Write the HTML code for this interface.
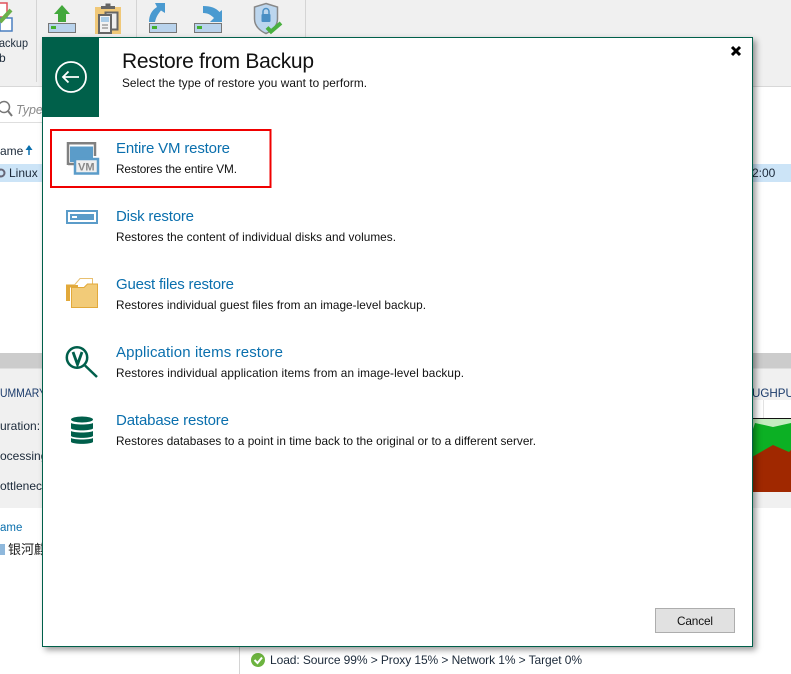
<!DOCTYPE html>
<html><head><meta charset="utf-8"><style>
html,body{margin:0;padding:0;background:#fff;width:791px;height:674px;overflow:hidden}
#dlg{position:absolute;left:42px;top:37px;width:709px;height:608px;background:#fff;border:1px solid #00604a;box-shadow:3px 3px 6px rgba(0,0,0,.4)}
svg{position:absolute;left:0;top:0}
text{font-family:"Liberation Sans","Noto Sans CJK SC",sans-serif}
.t{font-size:15px;fill:#0a6fad}
.d{font-size:11.8px;fill:#111}
.b{font-size:12px;fill:#1c2a3a}
</style></head><body>
<svg width="791" height="674" viewBox="0 0 791 674">
<rect x="0" y="0" width="791" height="86" fill="#f0f0f0"/>
<rect x="0" y="86" width="791" height="1" fill="#d8d8d8"/>
<rect x="36" y="0" width="1" height="82" fill="#d4d4d4"/>
<rect x="136" y="0" width="1" height="82" fill="#d4d4d4"/>
<rect x="305" y="0" width="1" height="82" fill="#d4d4d4"/>
<!-- backup icon -->
<rect x="-6" y="3" width="13" height="14" fill="#fff" stroke="#e0505a" stroke-width="1.5"/>
<rect x="0" y="18" width="12" height="13" fill="#fff" stroke="#4a7fc0" stroke-width="1.5"/>
<path d="M0 22L11 10" stroke="#6bb04a" stroke-width="4" fill="none"/>
<text x="-1" y="47" class="b" textLength="29" lengthAdjust="spacingAndGlyphs">ackup</text>
<text x="-1" y="62" class="b">b</text>
<!-- toolbar icons -->
<path d="M62 5L70 14H66V22H58V14H54Z" fill="#43a83c"/>
<rect x="48.500" y="23.500" width="27" height="9" fill="#b9d3ec" stroke="#777" stroke-width="1"/>
<rect x="51" y="26" width="5" height="3" fill="#43b030"/>
<rect x="95" y="7" width="26" height="27" fill="#f0c878"/>
<path d="M101 9V6H105.500V3.500H110.500V6H115V9Z" fill="#666"/>
<rect x="105.500" y="12.500" width="12" height="17" fill="#eee" stroke="#666" stroke-width="2"/>
<rect x="99" y="15" width="12" height="18" fill="#f2f2f2" stroke="#666" stroke-width="2"/>
<rect x="101" y="17" width="8" height="5" fill="#a9cce8"/>
<path d="M102 25H108M102 28H108" stroke="#777"/>
<path d="M149 22C149 15 152 10 157 7L155 3H165V13L161 10.500C158 14 156 17 155 22Z" fill="#4a9ad0"/>
<rect x="149.500" y="23.500" width="27" height="9" fill="#b9d3ec" stroke="#777"/>
<rect x="152" y="26" width="5" height="3" fill="#43b030"/>
<path d="M203 6C211 6 216 8 219.500 12L222 10V22H210L214 18C211 15 208 13 203 13Z" fill="#4a9ad0"/>
<rect x="194.500" y="23.500" width="27" height="9" fill="#b9d3ec" stroke="#777"/>
<rect x="197" y="26" width="5" height="3" fill="#43b030"/>
<path d="M266 3.500L277.500 7V19C277.500 26 272 31 266 33.500C260 31 254.500 26 254.500 19V7Z" fill="#bcd6ee" stroke="#888" stroke-width="1.500"/>
<rect x="261.500" y="14" width="9" height="8" rx="1" fill="#4a8fc4"/>
<path d="M263 14V11.500A3 3 0 0 1 269 11.500V14" stroke="#4a8fc4" stroke-width="1.500" fill="none"/>
<path d="M267 27.500L271 31.500L281 23" stroke="#4ab040" stroke-width="4" fill="none"/>
<!-- left list -->
<rect x="0" y="122" width="42" height="1" fill="#dedede"/>
<circle cx="4" cy="107" r="5.500" fill="none" stroke="#777" stroke-width="1.500"/>
<path d="M8 111L12 116" stroke="#777" stroke-width="2"/>
<text x="16" y="114" font-size="12.500" font-style="italic" fill="#8a8a8a">Type</text>
<text x="0" y="155" font-size="12" fill="#1c2a3a">ame</text>
<path d="M29 155V146" stroke="#0a6fad" stroke-width="1.500"/>
<path d="M25.500 150L29 145L32.500 150Z" fill="#0a6fad"/>
<rect x="0" y="164" width="791" height="18" fill="#cce4f7"/>
<circle cx="1" cy="173" r="3.500" fill="none" stroke="#667" stroke-width="2"/>
<text x="9" y="177" class="b">Linux</text>
<text x="752" y="177" class="b">2:00</text>
<!-- lower band -->
<rect x="0" y="353" width="791" height="15" fill="#cccccc"/>
<rect x="0" y="368" width="791" height="140" fill="#f0f0f0"/>
<rect x="0" y="368" width="791" height="1" fill="#dedede"/>
<text x="0" y="397" font-size="12" fill="#1a3a6a" textLength="46" lengthAdjust="spacingAndGlyphs">UMMARY</text>
<text x="0" y="430" class="b">uration:</text>
<text x="0" y="460" class="b">ocessing</text>
<text x="0" y="490" class="b" textLength="48" lengthAdjust="spacingAndGlyphs">ottleneck</text>
<text x="0" y="531" font-size="11.500" fill="#0a6fad">ame</text>
<rect x="0" y="544" width="5" height="11" fill="#8fb8dc"/>
<text x="8" y="554" font-size="13" fill="#222">银河麒</text>
<text x="743" y="397" font-size="12" fill="#1a3a6a" textLength="58" lengthAdjust="spacingAndGlyphs">OUGHPUT</text>
<rect x="752" y="400" width="39" height="18" fill="#fff"/>
<rect x="763" y="400" width="1" height="18" fill="#e2e2e2"/>
<rect x="752" y="418" width="39" height="74" fill="#c4ecc0"/>
<path d="M752 432L755 423L773 427L791 423V492H752Z" fill="#0cb024"/>
<path d="M752 457L773 445L789 452L791 450V492H752Z" fill="#a02800"/>
<rect x="752" y="418" width="39" height="1" fill="#111"/>
<!-- bottom status -->
<rect x="239" y="646" width="1" height="28" fill="#d4d4d4"/>
<circle cx="258" cy="660" r="7" fill="#6cb33f"/>
<path d="M254.500 660L257.500 663L262 657.500" stroke="#fff" stroke-width="2" fill="none"/>
<text x="270" y="664" class="b" textLength="312">Load: Source 99% &gt; Proxy 15% &gt; Network 1% &gt; Target 0%</text>
</svg>
<div id="dlg"></div>
<svg width="791" height="674" viewBox="0 0 791 674">
<rect x="43" y="38" width="56" height="79" fill="#00604a"/>
<circle cx="71" cy="77" r="15" fill="none" stroke="#fff" stroke-width="1.800"/>
<path d="M79 77H63M68.500 71.500L63 77L68.500 82.500" fill="none" stroke="#fff" stroke-width="1.800"/>
<path d="M732 47L740 55M740 47L732 55" stroke="#000" stroke-width="3"/>
<text x="122" y="68" font-size="21" fill="#111" textLength="192">Restore from Backup</text>
<text x="122" y="87" class="d" textLength="245">Select the type of restore you want to perform.</text>
<rect x="51" y="130" width="219.500" height="57" fill="none" stroke="#f00000" stroke-width="2"/>

<text x="116" y="153" class="t" textLength="114">Entire VM restore</text>
<text x="116" y="173" class="d" textLength="121">Restores the entire VM.</text>
<text x="116" y="221" class="t" textLength="78">Disk restore</text>
<text x="116" y="241" class="d" textLength="280">Restores the content of individual disks and volumes.</text>
<text x="116" y="289" class="t" textLength="118">Guest files restore</text>
<text x="116" y="309" class="d" textLength="310">Restores individual guest files from an image-level backup.</text>
<text x="116" y="357" class="t" textLength="167">Application items restore</text>
<text x="116" y="377" class="d" textLength="348">Restores individual application items from an image-level backup.</text>
<text x="116" y="425" class="t" textLength="113">Database restore</text>
<text x="116" y="445" class="d" textLength="420">Restores databases to a point in time back to the original or to a different server.</text>

<!-- VM icon -->
<path d="M68 165V143.300H95V156" fill="none" stroke="#808080" stroke-width="2.500"/>
<path d="M68 164H74" stroke="#808080" stroke-width="2.500"/>
<rect x="70" y="146.500" width="23" height="12" fill="#5b9cc9"/>
<rect x="70" y="158" width="4" height="4" fill="#5b9cc9"/>
<rect x="75" y="159" width="23" height="14.500" fill="#efefef" stroke="#5b9cc9" stroke-width="2.500"/>
<text x="78" y="170.500" font-size="11" font-weight="bold" fill="#888">VM</text>
<!-- Disk icon -->
<rect x="67" y="211" width="30" height="12" fill="#fff" stroke="#5b9cc9" stroke-width="2"/>
<rect x="70" y="214" width="24" height="6" fill="#5b9cc9"/>
<rect x="72" y="216" width="5" height="2" fill="#fff"/>
<!-- Folder icon -->
<rect x="66" y="285" width="4" height="16" fill="#e2a93a"/>
<rect x="66" y="284.500" width="12" height="3" fill="#e2a93a"/>
<path d="M74.500 285L80 278.500H92.500V285" fill="#fff" stroke="#e8c070"/>
<path d="M71.500 307.500V287.500H84L87.500 284H97.500V307.500Z" fill="#f2cb78" stroke="#e2a93a"/>
<!-- App icon -->
<circle cx="77" cy="357.500" r="10.200" fill="none" stroke="#005f4b" stroke-width="2.500"/>
<path d="M85 365.500L97 377" stroke="#005f4b" stroke-width="2.500"/>
<path d="M73 352L77.500 364.500L82 352" stroke="#005f4b" stroke-width="2.800" fill="none"/>
<!-- DB icon -->
<ellipse cx="82" cy="419.500" rx="11" ry="3" fill="#005f4b"/>
<path d="M71 423C74 425 90 425 93 423V428.500C90 431 74 431 71 428.500Z" fill="#005f4b"/>
<path d="M71 431C74 433 90 433 93 431V436C90 438.500 74 438.500 71 436Z" fill="#005f4b"/>
<path d="M71 438C74 440 90 440 93 438V442C90 444.500 74 444.500 71 442Z" fill="#005f4b"/>
<!-- Cancel -->
<rect x="655.500" y="608.500" width="79" height="24" fill="#e1e1e1" stroke="#adadad"/>
<text x="677" y="625" class="d" textLength="36">Cancel</text>
</svg>
</body></html>
